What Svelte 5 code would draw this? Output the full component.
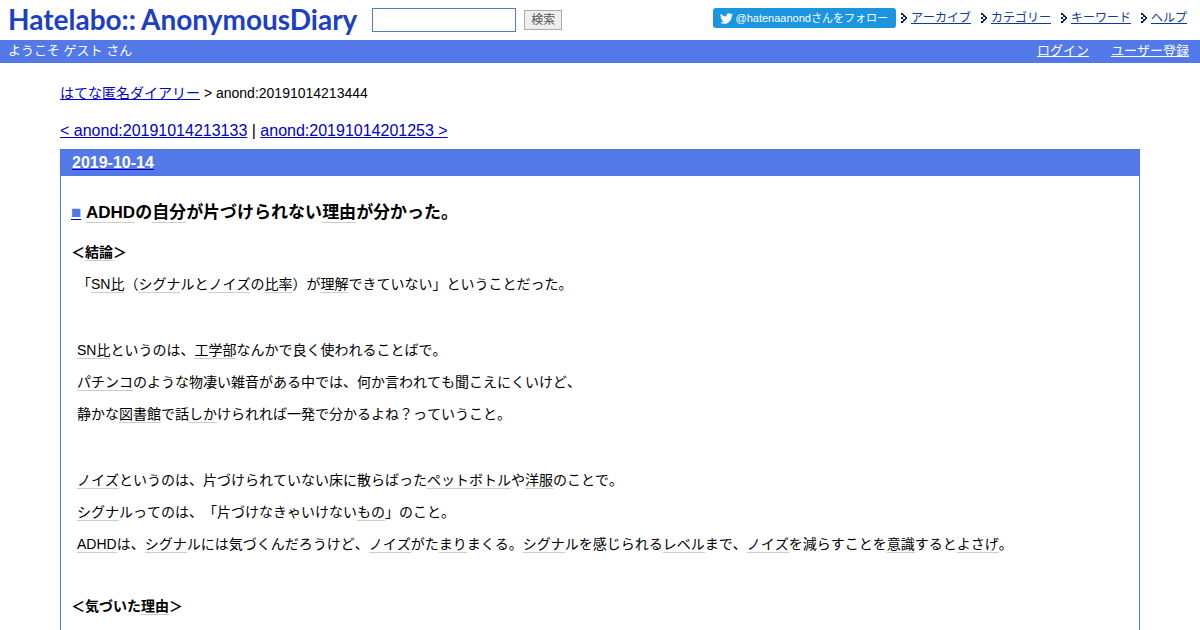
<script>
  const menu = ['アーカイブ', 'カテゴリー', 'キーワード', 'ヘルプ'];

  // Text between square brackets becomes a keyword link.
  const title = '[ADHD]の[自分]が片づけられない[理由]が分かった。';
  const paragraphs = [
    '「[SN比]（[シグナ]ルと[ノイズ]の[比率]）が[理解]できていない」ということだった。',
    '',
    '[SN比]というのは、[工学部]なんかで良く使われることばで。',
    '[パチンコ]のような物凄い雑音がある中では、何か言われても聞こえにくいけど、',
    '静かな[図書館]で話[しか]けられれば一発で分かるよね？っていうこと。',
    '',
    '[ノイズ]というのは、片づけられていない床に散らばった[ペットボトル]や[洋服]のことで。',
    '[シグナ]ルってのは、「片づけなきゃいけない[もの]」のこと。',
    '[ADHD]は、[シグナ]ルには気づくんだろうけど、[ノイズ]がた[まり]まくる。[シグナ]ルを感じられる[レベル]まで、[ノイズ]を減らすことを[意識]すると[よさげ]。'
  ];

  const split = (text) => text.split(/[[\]]/).map((part, i) => ({ part, keyword: i % 2 === 1 }));
</script>

{#snippet rich(text)}{#each split(text) as { part, keyword }}{#if keyword}<a class="keyword" href="#keyword">{part}</a>{:else}{part}{/if}{/each}{/snippet}

<header class="banner">
  <a class="logo" href="#top"><span>Hatelabo::</span><span>AnonymousDiary</span></a>
  <form class="search" onsubmit={(e) => e.preventDefault()}>
    <input type="text" name="word" aria-label="検索" />
    <button type="submit">検索</button>
  </form>
  <nav class="menu">
    <a class="follow" href="#follow">
      <svg viewBox="0 0 24 24" width="13" height="13" aria-hidden="true">
        <path fill="#fff" d="M23.95 4.57a10 10 0 0 1-2.82.77 4.96 4.96 0 0 0 2.16-2.72c-.95.55-2 .95-3.13 1.18a4.92 4.92 0 0 0-8.38 4.48C7.69 8.1 4.07 6.13 1.64 3.16a4.92 4.92 0 0 0 1.52 6.57 4.9 4.9 0 0 1-2.23-.61v.06a4.92 4.92 0 0 0 3.95 4.83 5 5 0 0 1-2.21.08 4.94 4.94 0 0 0 4.6 3.42A9.87 9.87 0 0 1 0 19.54a13.99 13.99 0 0 0 7.55 2.21c9.05 0 14-7.5 14-13.98 0-.21 0-.42-.02-.63a9.94 9.94 0 0 0 2.42-2.57z" />
      </svg>
      <span>@hatenaanondさんをフォロー</span>
    </a>
    {#each menu as item}
      <span class="entry">
        <svg viewBox="0 0 6 10" width="6" height="10" shape-rendering="crispEdges" aria-hidden="true">
          <path fill="#0a2060" d="M0 0h2v2H0zM2 2h2v2H2zM4 4h2v2H4zM2 6h2v2H2zM0 8h2v2H0zM0 4h2v2H0zM2 1h1v1H2zM4 3h1v1H4zM4 6h1v1H4zM2 8h1v1H2z" />
        </svg>
        <a href="#menu">{item}</a>
      </span>
    {/each}
  </nav>
</header>

<div class="guest">
  <span>ようこそ ゲスト さん</span>
  <nav>
    <a href="#login">ログイン</a>
    <a href="#register">ユーザー登録</a>
  </nav>
</div>

<main>
  <div class="crumbs"><a href="#top">はてな匿名ダイアリー</a> &gt; anond:20191014213444</div>
  <div class="pager"><a href="#prev">&lt; anond:20191014213133</a> | <a href="#next">anond:20191014201253 &gt;</a></div>
  <article class="day">
    <h2><a href="#day">2019-10-14</a></h2>
    <section>
      <h3><a class="mark" href="#entry">■</a> {@render rich(title)}</h3>
      <h4>{@render rich('＜[結論]＞')}</h4>
      {#each paragraphs as text}
        <p class:blank={!text}>{@render rich(text)}</p>
      {/each}
      <h4>{@render rich('＜気づいた[理由]＞')}</h4>
    </section>
  </article>
</main>

<style>
  :global(body) {
    margin: 0;
    background: #fff;
    color: #000;
    font-family: 'Liberation Sans', 'Noto Sans CJK JP', sans-serif;
    font-kerning: none;
    text-spacing-trim: space-all;
  }
  a {
    color: #0000cc;
  }
  .banner {
    display: flex;
    align-items: flex-start;
    height: 40px;
  }
  .logo {
    display: flex;
    gap: 5px;
    padding-left: 8px;
    color: #1c40c4;
    font: bold 28px/38px Lato, sans-serif;
    font-kerning: normal;
    text-decoration: none;
  }
  .search {
    display: flex;
    align-items: center;
    gap: 8px;
    margin: 8px 0 0 15px;
  }
  .search input {
    box-sizing: border-box;
    width: 144px;
    height: 24px;
    border: 1px solid #5279c7;
    padding: 2px;
    background: #fff;
  }
  .search button {
    box-sizing: border-box;
    width: 38px;
    height: 20px;
    border: 1px solid #aaa;
    padding: 0;
    background: #eee;
    color: #555;
    font: 12px/16px 'Liberation Sans', 'Noto Sans CJK JP', sans-serif;
  }
  .menu {
    display: flex;
    gap: 10px;
    margin: 8px 13px 0 auto;
    font-size: 12px;
    line-height: 20px;
    white-space: nowrap;
  }
  .follow {
    display: flex;
    align-items: center;
    gap: 3px;
    height: 20px;
    margin-right: -5px;
    border-radius: 3px;
    padding: 0 8px 0 7px;
    background: #1b95e0;
    color: #fff;
    font-size: 11px;
    text-decoration: none;
  }
  .entry {
    display: flex;
    align-items: center;
    gap: 4px;
  }
  .entry a {
    color: #0d3a9c;
  }
  .guest {
    display: flex;
    justify-content: space-between;
    padding: 0 11px 2px 8px;
    background: #5279e7;
    color: #fff;
    font-size: 13px;
    line-height: 21px;
  }
  .guest nav {
    display: flex;
    gap: 22px;
  }
  .guest a {
    color: #fff;
  }
  main {
    padding: 20px 60px 0;
  }
  .crumbs {
    font-size: 14px;
    line-height: 20px;
  }
  .pager {
    margin: 18px 0 8px;
    font-size: 16px;
    line-height: 20px;
  }
  .day {
    border: 1px solid #5279e7;
  }
  h2 {
    margin: 0;
    padding: 0 11px;
    background: #5279e7;
    font-size: 16px;
    line-height: 26px;
  }
  h2 a {
    color: #fff;
    text-decoration-color: #0000cc;
  }
  section {
    padding: 25px 10px;
  }
  h3 {
    margin: 0 0 15px;
    font-size: 17px;
    line-height: 24px;
  }
  .mark {
    color: #5279e7;
    text-decoration-color: #0000cc;
  }
  h4 {
    margin: 0 0 4px;
    font-size: 14px;
    line-height: 24px;
  }
  p {
    margin: 0 6px;
    font-size: 14px;
    line-height: 32px;
  }
  .blank {
    height: 34px;
  }
  p + h4 {
    margin-top: 34px;
  }
  .keyword {
    border-bottom: 1px solid #ccc;
    color: inherit;
    text-decoration: none;
  }
</style>
